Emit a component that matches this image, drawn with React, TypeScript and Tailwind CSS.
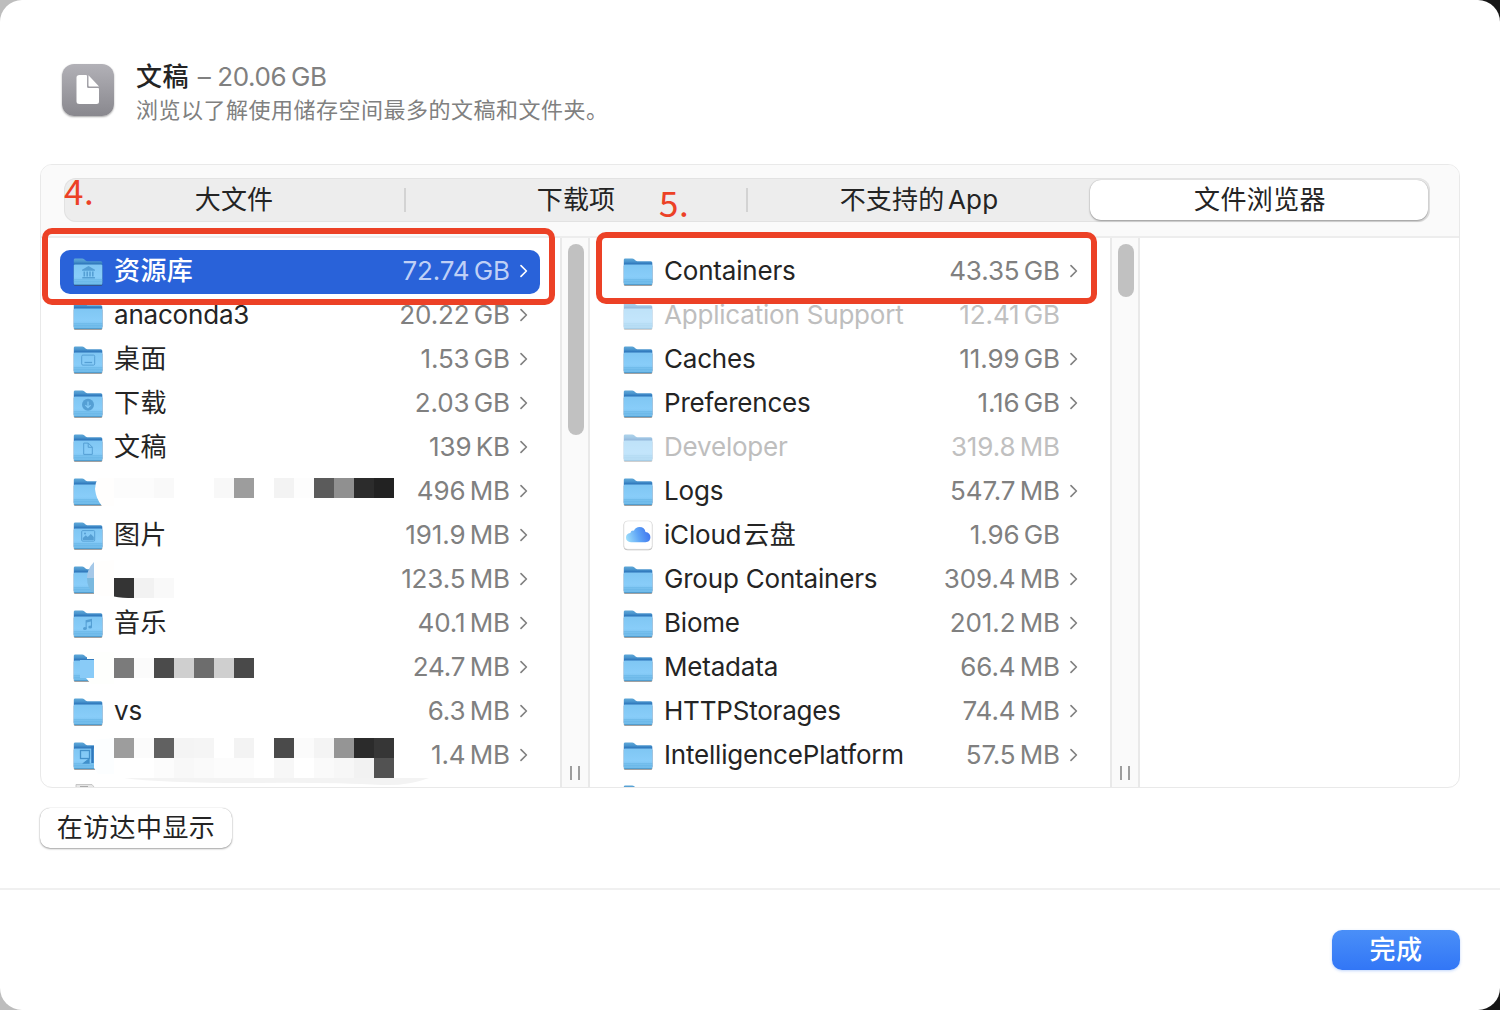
import React from "react";

type Glyph = "library" | "desktop" | "download" | "doc" | "picture" | "music";
type Row = {
  name?: string;
  cjk?: string;
  size: string;
  glyph?: Glyph;
  selected?: boolean;
  dim?: boolean;
  noArrow?: boolean;
  cloud?: boolean;
};

const homeRows: Row[] = [
  { cjk: "资源库", size: "72.74 GB", glyph: "library", selected: true },
  { name: "anaconda3", size: "20.22 GB" },
  { cjk: "桌面", size: "1.53 GB", glyph: "desktop" },
  { cjk: "下载", size: "2.03 GB", glyph: "download" },
  { cjk: "文稿", size: "139 KB", glyph: "doc" },
  { size: "496 MB" },
  { cjk: "图片", size: "191.9 MB", glyph: "picture" },
  { size: "123.5 MB" },
  { cjk: "音乐", size: "40.1 MB", glyph: "music" },
  { size: "24.7 MB" },
  { name: "vs", size: "6.3 MB" },
  { size: "1.4 MB" },
];

const libraryRows: Row[] = [
  { name: "Containers", size: "43.35 GB" },
  { name: "Application Support", size: "12.41 GB", dim: true, noArrow: true },
  { name: "Caches", size: "11.99 GB" },
  { name: "Preferences", size: "1.16 GB" },
  { name: "Developer", size: "319.8 MB", dim: true, noArrow: true },
  { name: "Logs", size: "547.7 MB" },
  { name: "iCloud", cjk: "云盘", size: "1.96 GB", cloud: true, noArrow: true },
  { name: "Group Containers", size: "309.4 MB" },
  { name: "Biome", size: "201.2 MB" },
  { name: "Metadata", size: "66.4 MB" },
  { name: "HTTPStorages", size: "74.4 MB" },
  { name: "IntelligencePlatform", size: "57.5 MB" },
];

const mosaic: [number, number, string][] = [
  [114, 478, "#fcfcfc"], [134, 478, "#fcfcfc"], [154, 478, "#f9f9f9"],
  [214, 478, "#f8f8f8"], [234, 478, "#9d9d9d"], [274, 478, "#f3f3f3"], [294, 478, "#fdfdfd"],
  [314, 478, "#5b5b5b"], [334, 478, "#909090"], [354, 478, "#2c2c2c"], [374, 478, "#222222"],
  [134, 578, "#f2f2f2"], [154, 578, "#f9f9f9"],
  [114, 658, "#7b7b7b"], [134, 658, "#fbfbfb"], [154, 658, "#4b4b4b"], [174, 658, "#cfcfcf"],
  [194, 658, "#6d6d6d"], [214, 658, "#cfcfcf"], [234, 658, "#494949"],
  [114, 738, "#9d9d9d"], [134, 738, "#fbfbfb"], [154, 738, "#616161"], [174, 738, "#f4f4f4"],
  [194, 738, "#f5f5f5"], [234, 738, "#f3f3f3"], [274, 738, "#4a4a4a"], [294, 738, "#fbfbfb"],
  [314, 738, "#f4f4f4"], [334, 738, "#959595"], [354, 738, "#2b2b2b"], [374, 738, "#363636"],
  [154, 758, "#fcfcfc"], [174, 758, "#f8f8f8"], [194, 758, "#fafafa"], [214, 758, "#fcfcfc"], [234, 758, "#fcfcfc"],
  [274, 758, "#f7f7f7"], [314, 758, "#fafafa"], [334, 758, "#f7f7f7"], [354, 758, "#f2f2f2"],
  [374, 758, "#525252"],
];

function FolderGlyph({ kind }: { kind: Glyph }) {
  const c = "#559fd4";
  switch (kind) {
    case "library":
      return (
        <g fill={c}>
          <path d="M9 12.6 15.5 9l6.5 3.600v1H9z" />
          <path d="M10.500 14.500h1.600v5h-1.600zM13.400 14.500H15v5h-1.600zM16.200 14.500h1.600v5h-1.600zM19 14.500h1.600v5H19zM9.300 20h12.600v1.300H9.300z" />
        </g>
      );
    case "desktop":
      return (
        <g fill="none" stroke={c}>
          <rect x="8.700" y="10" width="13" height="10" rx="1.200" />
          <path d="M11.500 17.400h7.600" strokeWidth="1.300" />
        </g>
      );
    case "download":
      return (
        <g>
          <circle cx="15" cy="15.600" r="6" fill={c} />
          <path d="M15 12.400v6M12.400 16l2.600 2.500 2.600-2.500" fill="none" stroke="#83c9f6" strokeWidth="1.300" />
        </g>
      );
    case "doc":
      return (
        <path d="M10.700 10h4.600l4 4v7.300h-8.600zM15.200 10v4.200h4.100" fill="none" stroke={c} strokeLinejoin="round" />
      );
    case "picture":
      return (
        <g>
          <rect x="8.700" y="9.500" width="13" height="10.500" rx="1" fill="none" stroke={c} />
          <path d="M9.800 18.800v-2l3-2.600 2 1.800 3-3.200 3 3.200v2.800z" fill={c} />
          <circle cx="12" cy="12.300" r="1" fill={c} />
        </g>
      );
    case "music":
      return (
        <g fill={c}>
          <path d="M12.600 11.200 19 9.700v8.100h-1.100v-5.300l-4.200 1v5.900h-1.100z" />
          <ellipse cx="11.900" cy="19.400" rx="1.900" ry="1.500" />
          <ellipse cx="17.200" cy="18" rx="1.900" ry="1.500" />
        </g>
      );
  }
}

function Folder({ glyph, dim }: { glyph?: Glyph; dim?: boolean }) {
  return (
    <svg
      width="32"
      height="30"
      viewBox="0 0 32 30"
      className={dim ? "mt-[2px] shrink-0 opacity-50" : "mt-[2px] shrink-0"}
    >
      <path d="M.8 8h28.500v18.400q0 1.500-1.500 1.500H2.300Q.8 27.900.8 26.400z" fill="#444" opacity=".5" />
      <path d="M.8 25V1.800Q.8.4 2.200.4h7q1 0 1.700.6l1.700 1.500q.8.7 1.900.7h13.300q1.500 0 1.500 1.600V25z" fill="url(#folderBack)" />
      <path d="M.8 7.600q0-1.200 1.200-1.200h26.100q1.200 0 1.200 1.200v18q0 1.400-1.500 1.400H2.300Q.8 27 .8 25.600z" fill="url(#folderFront)" />
      <path d="M.8 21.800h28.500M.8 23.700h28.500" stroke="#66b3e4" strokeWidth=".7" />
      <path d="M1.300 26.500h27.500" stroke="#4f9acb" strokeWidth=".9" />
      {glyph && (
        <g transform="translate(0 -.9)">
          <FolderGlyph kind={glyph} />
        </g>
      )}
    </svg>
  );
}

function CloudIcon() {
  return (
    <svg width="32" height="32" viewBox="0 0 32 32" className="shrink-0">
      <rect x=".6" y="1.200" width="28.800" height="29" rx="4" fill="#bdbdbd" />
      <rect x=".9" y=".9" width="28.200" height="28.400" rx="3.800" fill="#fff" stroke="#dcdcdc" strokeWidth=".6" />
      <path d="M8 22.200q-5-.2-5-4.600 0-4 4.300-4.600.8-2.800 3.600-2.300Q12.600 7 16.600 7q5 0 5.900 5 4.900.8 4.900 5.200 0 4.800-5 5z" fill="url(#cloudFill)" />
    </svg>
  );
}

function FileRow({ row }: { row: Row }) {
  const nameColor = row.selected ? "text-white" : row.dim ? "text-[#bebebe]" : "text-[#242424]";
  const sizeColor = row.selected ? "text-[#bfd0f6]" : row.dim ? "text-[#c0c0c0]" : "text-[#808080]";
  return (
    <div
      className={
        row.selected
          ? "flex h-11 shrink-0 items-center rounded-[10px] bg-[#2962d9] pl-[13px] pr-[12px]"
          : "flex h-11 shrink-0 items-center pl-[13px] pr-[12px]"
      }
    >
      {row.cloud ? <CloudIcon /> : <Folder glyph={row.glyph} dim={row.dim} />}
      <span className={`relative z-10 -mt-[2px] ml-[9px] flex flex-1 whitespace-nowrap ${nameColor}`}>
        {row.name && <span className="tracking-[-0.2px]">{row.name}</span>}
        {row.cjk && <span className={row.name ? "ml-[2px] tracking-[0.4px]" : row.selected ? "font-medium tracking-[0.4px]" : "tracking-[0.4px]"}>{row.cjk}</span>}
      </span>
      <span className={`relative z-10 -mt-[2px] whitespace-nowrap tracking-[-0.1px] [word-spacing:-3px] ${sizeColor}`}>{row.size}</span>
      <svg
        width="8"
        height="14"
        viewBox="0 0 8 14"
        fill="none"
        strokeWidth="1.6"
        strokeLinecap="round"
        strokeLinejoin="round"
        className={`-mt-[2px] ml-[10px] shrink-0 ${row.selected ? "stroke-white" : "stroke-[#808080]"} ${row.noArrow ? "invisible" : ""}`}
      >
        <path d="M1 1.600 6.400 7 1 12.400" />
      </svg>
    </div>
  );
}

function ScrollGutter({ thumb }: { thumb: string }) {
  return (
    <div className="flex w-[30px] shrink-0 flex-col items-center justify-between border-x-2 border-[#e9e9e9] bg-[#fafafa] pb-[7px] pt-[6px]">
      <div className={`ml-[2px] w-4 rounded-full bg-[#c1c1c1] ${thumb}`} />
      <div className="mr-px flex h-[14px] w-[10px] justify-between">
        <div className="w-[2px] bg-[#9d9d9d]" />
        <div className="w-[2px] bg-[#9d9d9d]" />
      </div>
    </div>
  );
}

function RedactionLayer() {
  return (
    <svg className="absolute left-0 top-0" width="519" height="550" viewBox="41 238 519 550">
      <path d="M98 478Q95 483 95 489 96 499 102 506H114V478z" fill="#fffefd" />
      <path d="M94 562V594l8 2h12V560z" fill="#fffefd" />
      <path d="M94 562Q87 569 87 578H94z" fill="#a5c8e8" />
      <path d="M87 578Q87 589 94 593V578z" fill="#7ab9df" />
      <path d="M87 652V659H94V678H86L91 684H114V652z" fill="#fefffd" />
      <rect x="80" y="660" width="14" height="18" fill="#89cbf7" />
      <path d="M94 740V768L98 774H114V738z" fill="#fcfeff" />
      <path d="M114 578h20v20q-12 0-20-1.500z" fill="#343434" />
      {mosaic.map(([x, y, fill]) => (
        <rect key={`${x}-${y}`} x={x} y={y} width="20" height="20" fill={fill} />
      ))}
      <path d="M124 778H429Q408 786 382 785 330 782 250 783 160 783 124 778z" fill="#f3f3f3" />
      <g fill="none" stroke="#4190ca" strokeWidth="1.300">
        <rect x="80.500" y="750.500" width="9" height="8" />
        <path d="M84 763l5-4v4z" fill="#4190ca" />
        <path d="M92.500 746v17" stroke="#2f78bd" strokeWidth="2.500" />
      </g>
      <path d="M76 784.500h16l4 5H76z" fill="#e6e6e6" stroke="#bcbcbc" strokeWidth=".8" />
      <path d="M80 786.500h8" stroke="#aaa" />
    </svg>
  );
}

const tabs = ["大文件", "下载项", "不支持的 App"];

export default function App() {
  return (
    <div className="relative h-[1010px] w-[1500px] overflow-hidden bg-[linear-gradient(90deg,#bdbdbd_50%,#171717_50%)] font-['Inter','Noto_Sans_CJK_SC',sans-serif] text-[26px] leading-[36px] text-[#242424]">
      <svg width="0" height="0" className="absolute">
        <defs>
          <linearGradient id="folderBack" x1="0" y1="0" x2="0" y2="1">
            <stop offset="0" stopColor="#5fa8d8" />
            <stop offset=".12" stopColor="#4c97cf" />
            <stop offset=".24" stopColor="#2a72b8" />
          </linearGradient>
          <linearGradient id="folderFront" x1="0" y1="0" x2="0" y2="1">
            <stop offset="0" stopColor="#7fc6f3" />
            <stop offset=".6" stopColor="#88cdf9" />
            <stop offset="1" stopColor="#6db9e8" />
          </linearGradient>
          <linearGradient id="cloudFill" x1="0" y1=".6" x2="1" y2=".4">
            <stop offset="0" stopColor="#9adcfb" />
            <stop offset=".5" stopColor="#5ea4f6" />
            <stop offset="1" stopColor="#3f73ee" />
          </linearGradient>
        </defs>
      </svg>
      <div className="flex h-full flex-col rounded-[22px] bg-white">
        <header className="flex h-[164px] shrink-0 pl-[62px] pt-[60px]">
          <div className="mt-1 flex size-[52px] items-center justify-center rounded-[12px] bg-linear-to-b from-[#b2b1b7] to-[#89888e] shadow-[0_1px_2px_rgba(0,0,0,0.35)]">
            <svg width="26" height="32" viewBox="0 0 26 32" fill="#fff">
              <path d="M4.500 1H11q1 0 1 1v10.500q0 1.500 1.500 1.500H23q1 0 1 1v12.500q0 2.500-2.500 2.500h-17Q1.500 30 1.500 27.500V3.500Q1.500 1 4.500 1z" />
              <path d="M13.500 1.200 24 12.500H14.500q-1 0-1-1z" />
            </svg>
          </div>
          <div className="ml-[22px] flex flex-col">
            <h1 className="-mt-px text-[26px] leading-[36px] font-normal">
              <span className="font-medium tracking-[0.4px]">文稿</span>
              <span className="ml-[2px] tracking-[-0.4px] text-[#808080]"> – 20.06<span className="[word-spacing:-2px]"> GB</span></span>
            </h1>
            <p className="text-[22px] leading-[30px] tracking-[0.5px] text-[#808080]">浏览以了解使用储存空间最多的文稿和文件夹。</p>
          </div>
        </header>

        <section className="mx-10 flex h-[624px] shrink-0 flex-col overflow-hidden rounded-[12px] border border-[#e9e9e9]">
          <div className="h-[73px] shrink-0 border-b-2 border-[#ededed] bg-[#fafafa] pl-[23px] pr-[29px] pt-[13px]">
            <div className="flex h-11 rounded-[12px] bg-[#ededed] shadow-[inset_0_0_0_1px_#e2e2e2]">
              {tabs.map((t, i) => (
                <div key={t} className="flex w-[342px] shrink-0 items-center">
                  <span className="-mt-px flex-1 text-center tracking-[0.2px] [word-spacing:-4px]">{t}</span>
                  {i < 2 && <div className="h-6 w-[2px] bg-[#d3d3d3]" />}
                </div>
              ))}
              <div className="my-[2px] mr-[2px] flex flex-1 items-center justify-center rounded-[11px] bg-white tracking-[0.4px] shadow-[0_1px_2px_rgba(0,0,0,0.35),0_0_1px_rgba(0,0,0,0.3)]">
                <span className="-mt-px ml-[2px]">文件浏览器</span>
              </div>
            </div>
          </div>
          <div className="flex min-h-0 flex-1">
            <div className="relative flex w-[519px] shrink-0 flex-col overflow-hidden pl-[19px] pr-[20px] pt-3">
              {homeRows.map((r, i) => (
                <FileRow key={i} row={r} />
              ))}
              <RedactionLayer />
            </div>
            <ScrollGutter thumb="h-[191px]" />
            <div className="flex w-[520px] shrink-0 flex-col overflow-hidden px-[20px] pt-3">
              {libraryRows.map((r, i) => (
                <FileRow key={i} row={r} />
              ))}
              <div className="shrink-0 pl-[13px] pt-[5px]">
                <Folder />
              </div>
            </div>
            <ScrollGutter thumb="h-[53px]" />
            <div className="flex-1" />
          </div>
        </section>

        <div className="flex h-[100px] shrink-0 pl-10 pt-5">
          <button className="h-10 w-48 rounded-[10px] bg-white pb-px tracking-[0.4px] shadow-[0_1px_2px_rgba(0,0,0,0.35),0_0_1px_rgba(0,0,0,0.3)]">
            在访达中显示
          </button>
        </div>

        <footer className="flex flex-1 justify-end border-t-2 border-[#f0f0f0] pr-10 pt-10">
          <button className="h-10 w-32 rounded-[10px] bg-linear-to-b from-[#4a8ff8] to-[#3276f6] pb-px font-medium tracking-[0.4px] text-white shadow-[0_1px_3px_rgba(50,118,246,0.3)]">
            完成
          </button>
        </footer>
      </div>

      <div className="absolute left-[42px] top-[228px] z-20 h-[77px] w-[513px] rounded-[10px] border-[6px] border-[#ec4126]" />
      <div className="absolute left-[596px] top-[232px] z-20 h-[72px] w-[501px] rounded-[10px] border-[6px] border-[#ec4126]" />
      <span className="absolute left-[64px] top-[170px] z-20 font-['Noto_Sans_CJK_SC',sans-serif] text-[35px] leading-[40px] font-normal tracking-[0.5px] text-[#ec4126]">4.</span>
      <span className="absolute left-[659px] top-[182px] z-20 font-['Noto_Sans_CJK_SC',sans-serif] text-[35px] leading-[40px] font-normal tracking-[0.5px] text-[#ec4126]">5.</span>
    </div>
  );
}
